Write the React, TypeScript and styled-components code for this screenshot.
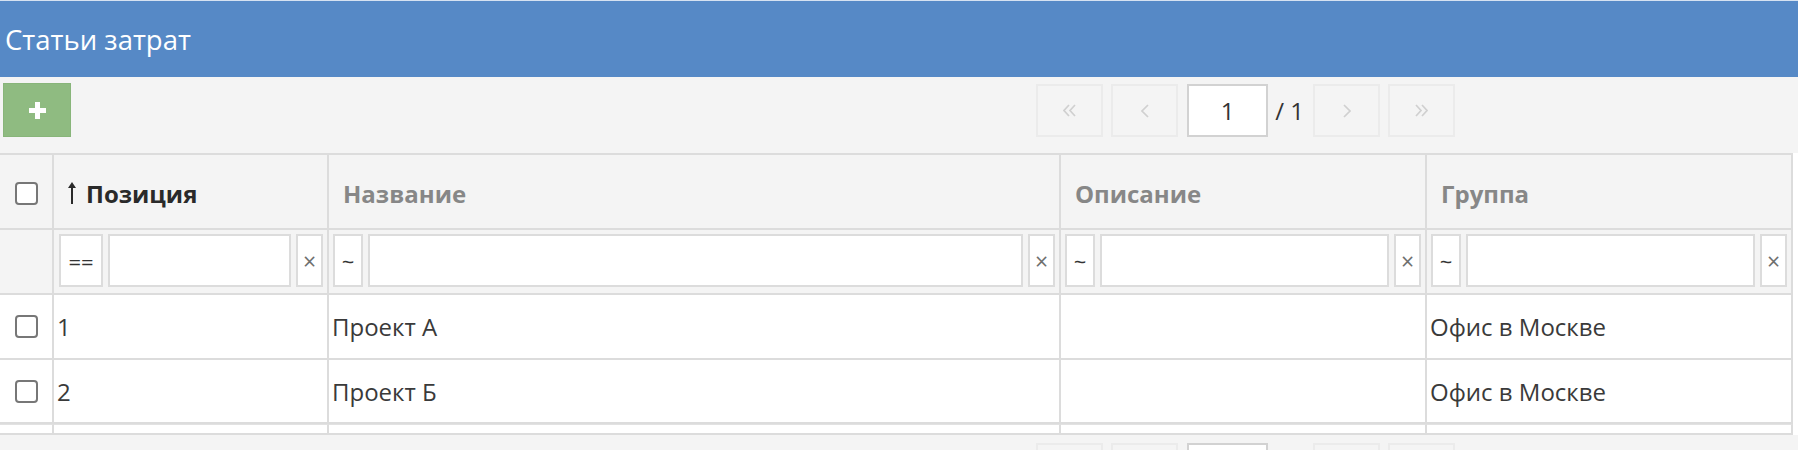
import React from "react";
import styled, { createGlobalStyle } from "styled-components";

const GlobalStyle = createGlobalStyle`
  html, body { margin: 0; padding: 0; background: #ffffff; }
  body { font-family: "Open Sans", "Noto Sans", sans-serif; color: #333333; }
  *, *::before, *::after { box-sizing: border-box; }
`;

const LINE = "#dcdcdc";
const COLS = "54px 275px 732px 366px 366px";

const Panel = styled.div`
  width: 1798px;
  overflow: hidden;
`;

const PanelHeader = styled.div`
  height: 77px;
  background: #5689c6;
  border-top: 1px solid #d6e2f1;
  color: #ffffff;
  font-size: 27.5px;
  display: flex;
  align-items: center;
  padding-left: 5px;
`;

const Toolbar = styled.div<{ $pad: number; $h: number }>`
  display: flex;
  align-items: flex-start;
  background: #f4f4f4;
  height: ${(p) => p.$h}px;
  padding: ${(p) => p.$pad}px 3px 0 3px;
`;

const AddButton = styled.button`
  width: 68px;
  height: 54px;
  background: #8fbb81;
  border: 1px solid #88b57a;
  border-radius: 0;
  padding: 0;
  display: flex;
  align-items: center;
  justify-content: center;
  cursor: pointer;
`;

const Pager = styled.div<{ $offset: number }>`
  display: flex;
  align-items: center;
  gap: 8px;
  margin-left: auto;
  margin-right: 340px;
  margin-top: ${(p) => p.$offset}px;
`;

const PageButton = styled.button`
  width: 67px;
  height: 53px;
  background: #f4f4f4;
  border: 2px solid #ebebeb;
  border-radius: 0;
  padding: 0;
  display: flex;
  align-items: center;
  justify-content: center;
`;

const PageInput = styled.input`
  width: 81px;
  height: 53px;
  border: 2px solid #d2d2d2;
  background: #ffffff;
  text-align: center;
  font-family: inherit;
  font-size: 24px;
  color: #333333;
  padding: 0;
  margin-left: 1px;
  outline: none;
`;

const PageLabel = styled.span`
  font-size: 24px;
  color: #333333;
  margin: 0 1px 0 -1px;
`;

const Table = styled.div`
  width: 1793px;
  border-top: 2px solid ${LINE};
`;

const Row = styled.div<{ $h: number; $bg: string }>`
  display: grid;
  grid-template-columns: ${COLS};
  height: ${(p) => p.$h}px;
  background: ${(p) => p.$bg};
`;

const Cell = styled.div<{ $center?: boolean; $topLine?: boolean }>`
  display: flex;
  align-items: center;
  justify-content: ${(p) => (p.$center ? "center" : "flex-start")};
  border-right: 2px solid ${LINE};
  border-bottom: 2px solid ${LINE};
  border-top: ${(p) => (p.$topLine ? `1px solid #e2e2e2` : "none")};
  min-width: 0;
`;

const HeadCell = styled(Cell)<{ $active?: boolean }>`
  padding: 3px 0 0 14px;
  font-size: 24px;
  font-weight: 700;
  color: ${(p) => (p.$active ? "#2a2a2a" : "#878787")};
  gap: 10px;
`;

const FilterCell = styled(Cell)<{ $padL: number }>`
  padding: 0 4px 2px ${(p) => p.$padL}px;
  gap: 5px;
`;

const BodyCell = styled(Cell)`
  padding-left: 3px;
  font-size: 24px;
  color: #3a3a3a;
  white-space: nowrap;
`;

const Checkbox = styled.span<{ $shift?: number }>`
  display: inline-block;
  width: 23px;
  height: 23px;
  margin-top: ${(p) => p.$shift ?? 0}px;
  border: 2px solid #777777;
  border-radius: 4px;
  background: #ffffff;
`;

const OpBox = styled.div<{ $w: number }>`
  width: ${(p) => p.$w}px;
  height: 53px;
  flex: none;
  border: 2px solid ${LINE};
  background: #ffffff;
  display: flex;
  align-items: center;
  justify-content: center;
  font-size: 22px;
  color: #333333;
`;

const FilterInput = styled.input`
  flex: 1;
  min-width: 0;
  height: 53px;
  border: 2px solid ${LINE};
  background: #ffffff;
  padding: 0 6px;
  font-family: inherit;
  font-size: 22px;
  outline: none;
`;

const ClearBox = styled.div`
  width: 27px;
  height: 53px;
  flex: none;
  border: 2px solid ${LINE};
  background: #ffffff;
  display: flex;
  align-items: center;
  justify-content: center;
  font-size: 23px;
  color: #6f6f6f;
`;

const PlusIcon = () => (
  <svg width="17" height="17" viewBox="0 0 17 17">
    <path d="M6 0h5v6h6v5h-6v6H6v-6H0V6h6z" fill="#ffffff" />
  </svg>
);

const SortUp = () => (
  <svg width="8" height="22" viewBox="0 0 8 22">
    <path d="M4 0 L8 6 H5 V22 H3 V6 H0 Z" fill="#2a2a2a" />
  </svg>
);

const Chevron = ({ dir, double }: { dir: "l" | "r"; double?: boolean }) => {
  const flip = dir === "r" ? "scale(-1,1)" : undefined;
  if (double) {
    return (
      <svg width="13" height="13" viewBox="0 0 13 13">
        <g transform={flip} style={{ transformOrigin: "6.5px 6.5px" }}>
          <polyline points="6,1 1,6.5 6,12" fill="none" stroke="#d0d0d0" strokeWidth="1.7" />
          <polyline points="12,1 7,6.5 12,12" fill="none" stroke="#d0d0d0" strokeWidth="1.7" />
        </g>
      </svg>
    );
  }
  return (
    <svg width="8" height="14" viewBox="0 0 8 14">
      <g transform={flip} style={{ transformOrigin: "4px 7px" }}>
        <polyline points="7,1 1,7 7,13" fill="none" stroke="#d0d0d0" strokeWidth="1.7" />
      </g>
    </svg>
  );
};

const PagerBlock = ({ offset }: { offset: number }) => (
  <Pager $offset={offset}>
    <PageButton aria-label="first">
      <Chevron dir="l" double />
    </PageButton>
    <PageButton aria-label="prev">
      <Chevron dir="l" />
    </PageButton>
    <PageInput defaultValue="1" />
    <PageLabel>/ 1</PageLabel>
    <PageButton aria-label="next">
      <Chevron dir="r" />
    </PageButton>
    <PageButton aria-label="last">
      <Chevron dir="r" double />
    </PageButton>
  </Pager>
);

const filters = [
  { op: "==", w: 44, padL: 5 },
  { op: "~", w: 30, padL: 4 },
  { op: "~", w: 30, padL: 4 },
  { op: "~", w: 30, padL: 4 },
];

const rows = [
  { pos: "1", name: "Проект А", desc: "", group: "Офис в Москве", h: 65 },
  { pos: "2", name: "Проект Б", desc: "", group: "Офис в Москве", h: 64 },
];

export default function App() {
  return (
    <>
      <GlobalStyle />
      <Panel>
        <PanelHeader>Статьи затрат</PanelHeader>
        <Toolbar $pad={6} $h={76}>
          <AddButton aria-label="add">
            <PlusIcon />
          </AddButton>
          <PagerBlock offset={1} />
        </Toolbar>
        <Table>
          <Row $h={75} $bg="#f4f4f4">
            <Cell $center>
              <Checkbox $shift={3} />
            </Cell>
            <HeadCell $active>
              <SortUp />
              <span>Позиция</span>
            </HeadCell>
            <HeadCell>Название</HeadCell>
            <HeadCell>Описание</HeadCell>
            <HeadCell>Группа</HeadCell>
          </Row>
          <Row $h={65} $bg="#f4f4f4">
            <Cell />
            {filters.map((f, i) => (
              <FilterCell key={i} $padL={f.padL}>
                <OpBox $w={f.w}>{f.op}</OpBox>
                <FilterInput />
                <ClearBox>×</ClearBox>
              </FilterCell>
            ))}
          </Row>
          {rows.map((r) => (
            <Row key={r.pos} $h={r.h} $bg="#ffffff">
              <Cell $center>
                <Checkbox />
              </Cell>
              <BodyCell>{r.pos}</BodyCell>
              <BodyCell>{r.name}</BodyCell>
              <BodyCell>{r.desc}</BodyCell>
              <BodyCell>{r.group}</BodyCell>
            </Row>
          ))}
          <Row $h={11} $bg="#ffffff">
            <Cell $topLine />
            <Cell $topLine />
            <Cell $topLine />
            <Cell $topLine />
            <Cell $topLine />
          </Row>
        </Table>
        <Toolbar $pad={8} $h={60}>
          <PagerBlock offset={0} />
        </Toolbar>
      </Panel>
    </>
  );
}
